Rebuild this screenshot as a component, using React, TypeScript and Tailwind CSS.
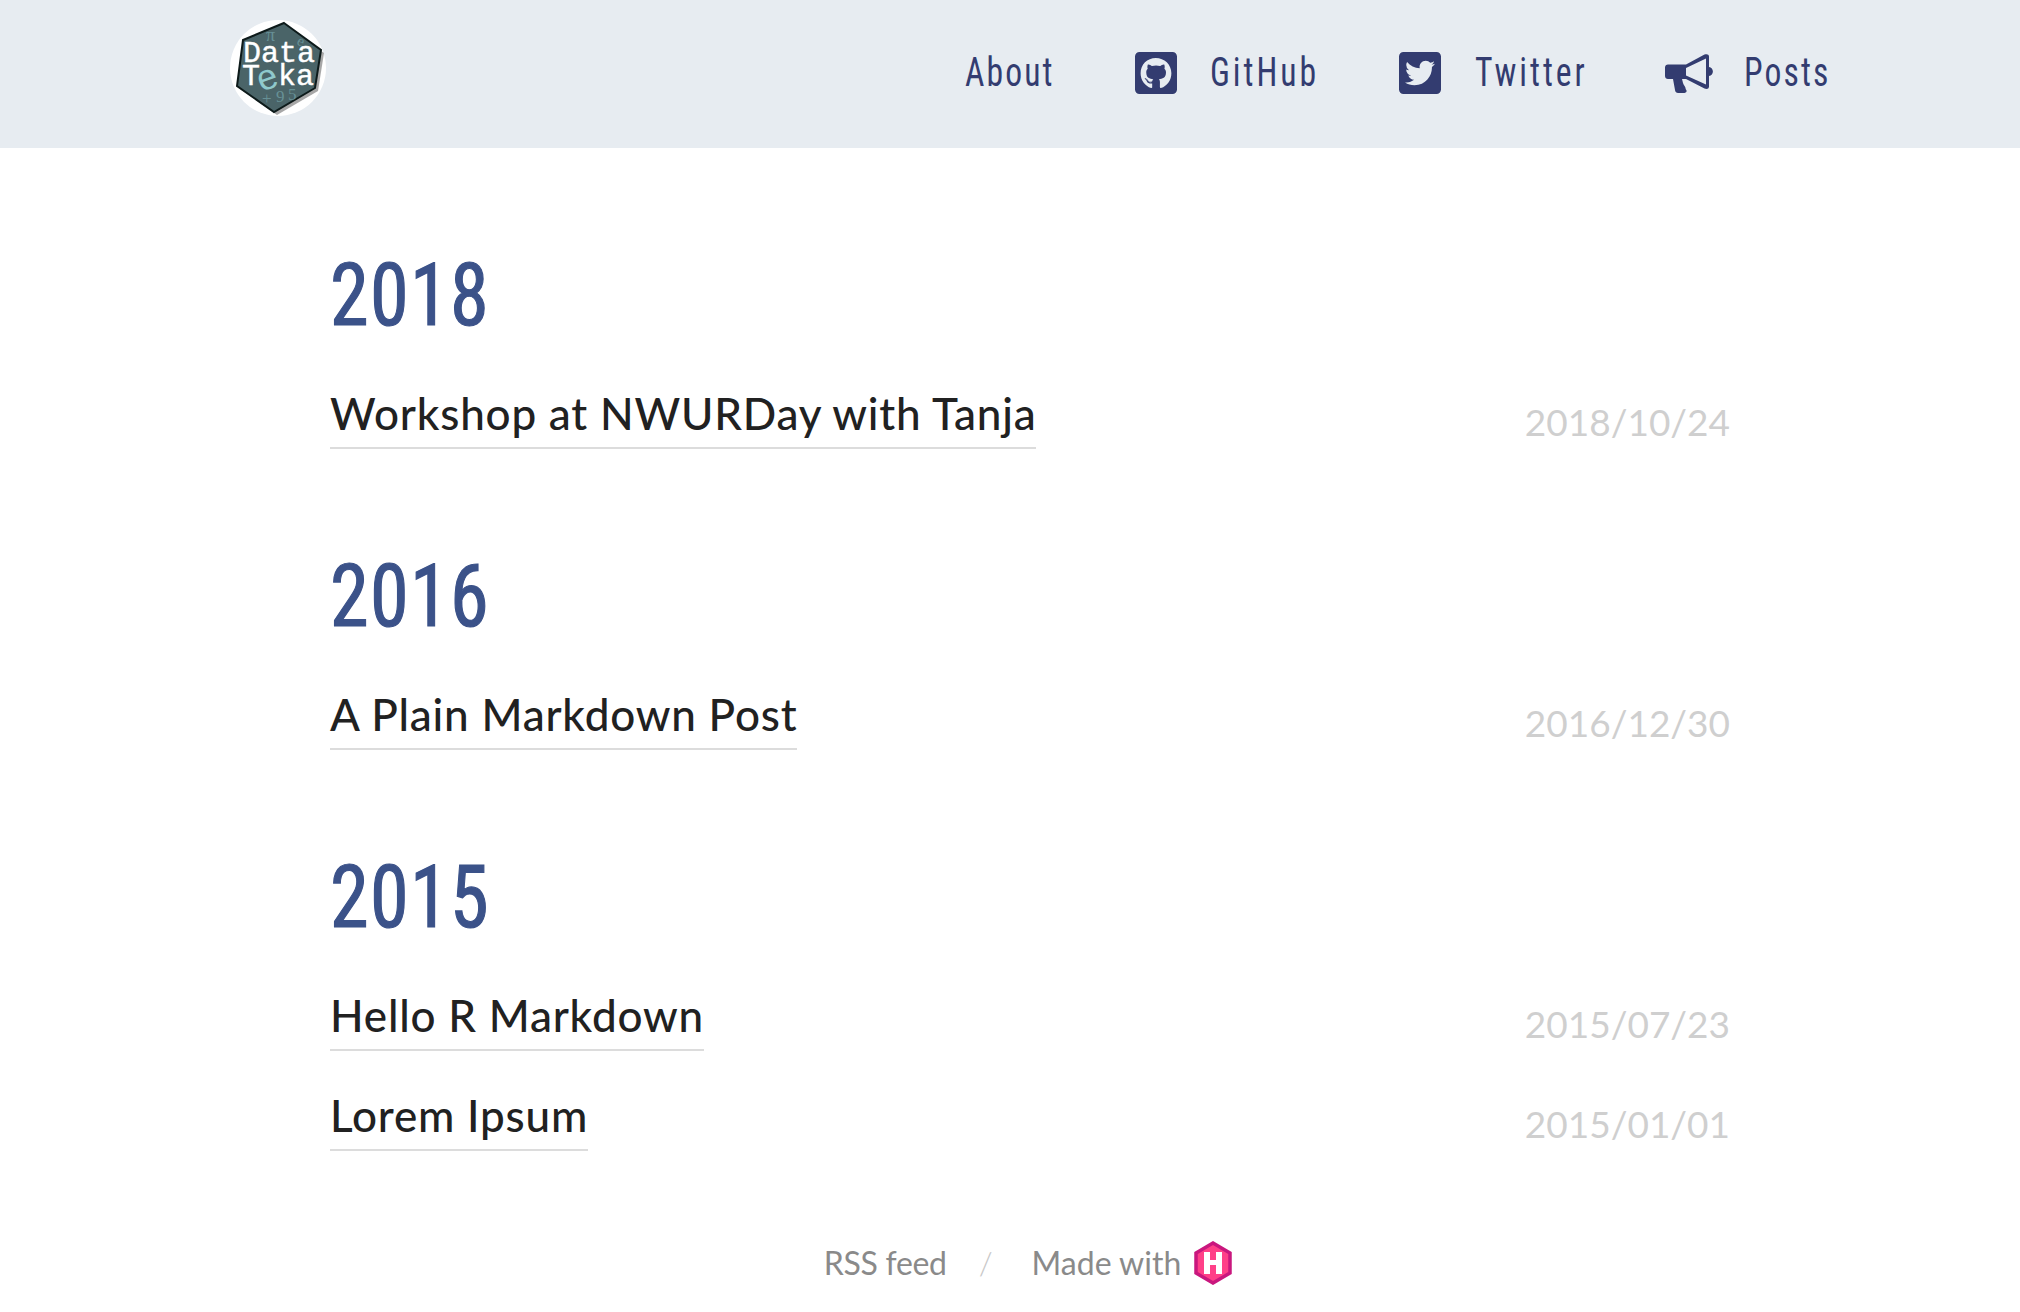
import React from 'react';
import { FaGithubSquare, FaTwitterSquare } from 'react-icons/fa';

const sections = [
  { year: '2018', posts: [{ title: 'Workshop at NWURDay with Tanja', date: '2018/10/24' }] },
  { year: '2016', posts: [{ title: 'A Plain Markdown Post', date: '2016/12/30' }] },
  {
    year: '2015',
    posts: [
      { title: 'Hello R Markdown', date: '2015/07/23' },
      { title: 'Lorem Ipsum', date: '2015/01/01' },
    ],
  },
];

const narrow = "font-['Liberation_Sans_Narrow','Roboto_Condensed','Liberation_Sans',sans-serif]";
const navText = 'inline-block whitespace-nowrap origin-left scale-x-[0.82]';

const hexPoints = '54,5 91,32 85,70 44,94 7,68 13,22';

const Logo = () => (
  <svg width="98" height="102" viewBox="0 0 98 102" className="block">
    <circle cx="48" cy="50" r="48" fill="#fff" />
    <polygon points={hexPoints} fill="#222" opacity="0.4" transform="translate(3,3)" />
    <polygon points={hexPoints} fill="#4a6468" stroke="#0d1a1a" strokeWidth="2" />
    <g fontFamily="Liberation Serif" fill="#7fb4bb" opacity="0.55">
      <text x="36" y="23" fontSize="18">π</text>
      <text x="66" y="26" fontSize="15" transform="rotate(25 66 26)">e</text>
      <text x="46" y="84" fontSize="17">9</text>
      <text x="58" y="82" fontSize="17">5</text>
      <text x="32" y="86" fontSize="17">+</text>
    </g>
    <text x="27" y="71" fontSize="36" fill="#8fc9cc" fontFamily="Liberation Sans" transform="rotate(-20 38 60)">e</text>
    <g fontFamily="Liberation Mono" fontSize="30" fill="#fff" stroke="#fff" strokeWidth="0.4">
      <text x="13" y="44">Data</text>
      <text x="12" y="67">T</text>
      <text x="48" y="67">ka</text>
    </g>
  </svg>
);

const Bullhorn = () => (
  <svg width="48" height="40" viewBox="0 0 48 40" className="block shrink-0" fill="#333c70">
    <path
      fillRule="evenodd"
      d="M3 11.5h18L39.5 1.6c2-.9 4.5-.5 4.5 2V14c2.400.5 3.900 2.200 3.900 4.500S46.400 22.500 44 23v10.400c0 2.500-2.500 3-4.500 2L21 26h-4l1 4c.8 2.600 2.600 3.800 2.600 5.500 0 1 1 1.500 1 2.500 0 1.400-1.500 2-3.500 2h-5c-1.800 0-2.700-.9-3-2.400L8 26H3c-1.700 0-3-1.300-3-3v-8.500c0-1.700 1.300-3 3-3zM21 15v7.500l20 9V5.500z"
    />
  </svg>
);

const HugoIcon = () => (
  <svg width="40" height="44" viewBox="0 0 40 44" className="block">
    <polygon points="20,2 37,12 37,32 20,42 3,32 3,12" fill="#ff4088" stroke="#c9177e" strokeWidth="3.500" />
    <path d="M11 11h6v8h6v-8h6v22h-6v-9h-6v9h-6z" fill="#fff" />
  </svg>
);

export default function App() {
  return (
    <div className="min-h-[1312px] bg-white font-['Lato',sans-serif]">
      <header className="h-[148px] bg-[#e7ecf1] flex items-start justify-between pl-[230px] pr-[193px]">
        <div className="pt-[18px]">
          <Logo />
        </div>
        <nav className={`flex items-center h-[145px] text-[41px] tracking-[3.6px] text-[#333c70] ${narrow}`}>
          <span className={`w-[88px] tracking-[2.6px] ${navText}`}>About</span>
          <FaGithubSquare className="ml-[79px] mr-[30px] text-[48px]" />
          <span className={`w-[107px] ${navText}`}>GitHub</span>
          <FaTwitterSquare className="ml-[79px] mr-[31px] text-[48px]" />
          <span className={`w-[112px] ${navText}`}>Twitter</span>
          <span className="ml-[78px] mr-[31px]">
            <Bullhorn />
          </span>
          <span className={`w-[83px] tracking-[2.6px] ${navText}`}>Posts</span>
        </nav>
      </header>

      <main className="pl-[330px] pr-[290px] pt-[95px]">
        {sections.map((s) => (
          <section key={s.year} className="mb-[89px] last:mb-[82px]">
            <h2
              className={`origin-left scale-x-[0.89] text-[88px] leading-[104px] tracking-[1.5px] [-webkit-text-stroke:1.2px_#3b5289] text-[#3b5289] ${narrow}`}
            >
              {s.year}
            </h2>
            <div className="mt-[32px] flex flex-col gap-[24px]">
              {s.posts.map((p) => (
                <div key={p.title} className="flex items-start justify-between">
                  <span className="border-b-2 border-[#dcdcdc] text-[44px] leading-[66px] tracking-[0.8px] font-medium text-[#212121] pt-[1px] pb-[1px]">
                    {p.title}
                  </span>
                  <span className="pt-[10px] text-[37px] leading-[66px] text-[#cfcfcf]">{p.date}</span>
                </div>
              ))}
            </div>
          </section>
        ))}
      </main>

      <footer className="flex items-center justify-center pl-[37px] text-[32px] text-[#8a8a8a]">
        <span className="tracking-[-0.3px]">RSS feed</span>
        <span className="ml-[32px] mr-[39px] font-light text-[#c8c8c8]">/</span>
        <span className="flex items-center gap-[12px]">
          Made with <HugoIcon />
        </span>
      </footer>
    </div>
  );
}
